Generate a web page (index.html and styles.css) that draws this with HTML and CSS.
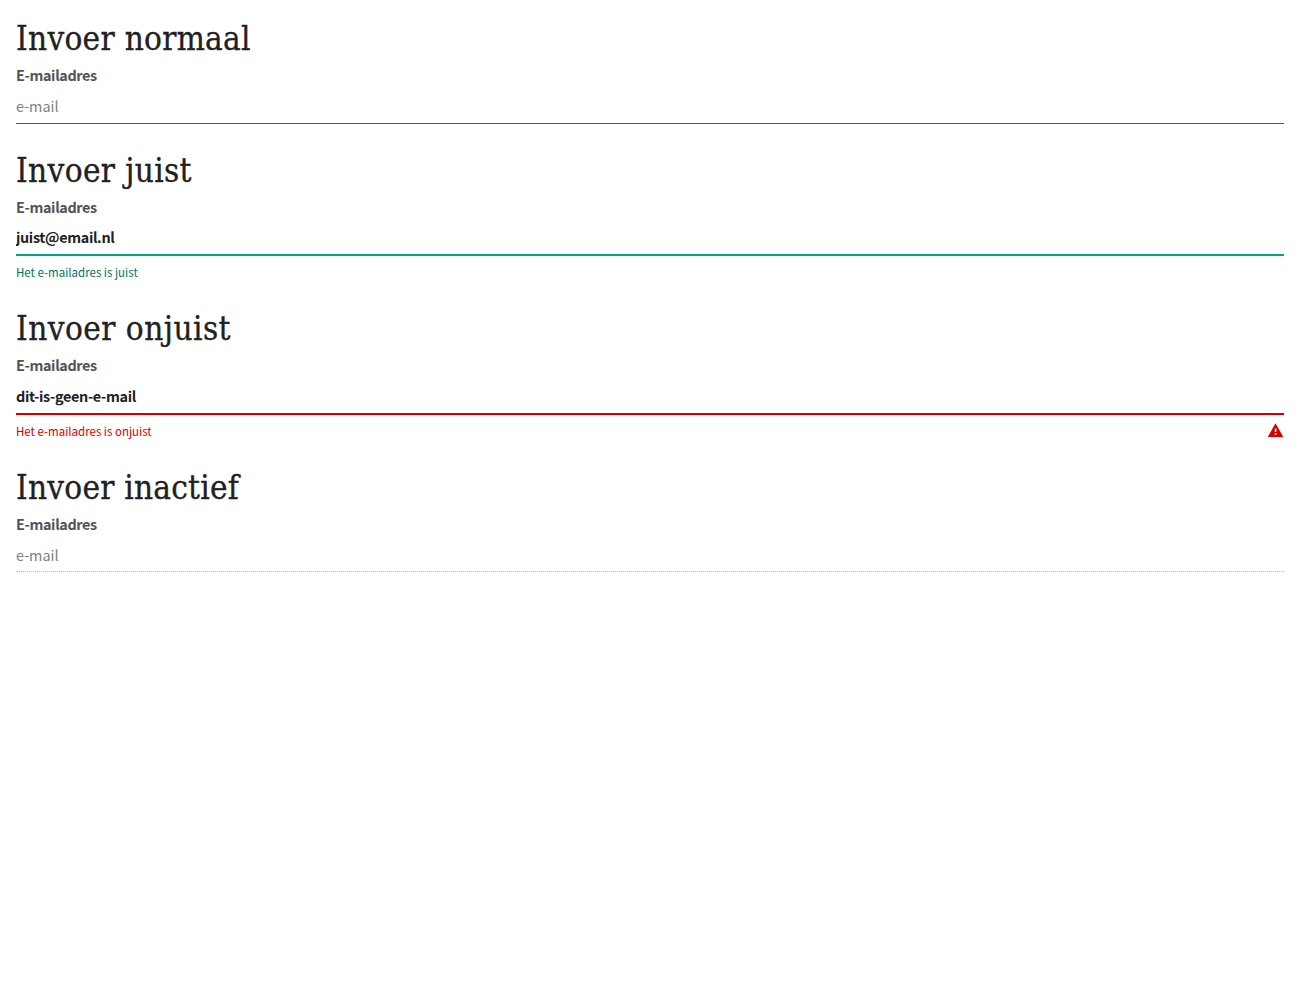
FILE: index.html
```html
<!DOCTYPE html>
<html lang="nl">
<head>
<meta charset="utf-8">
<title>Invoer</title>
<link rel="stylesheet" href="styles.css">
</head>
<body>
<main class="forms">
  <section class="field field--normal">
    <h1 class="title">Invoer normaal</h1>
    <label class="label" for="a">E-mailadres</label>
    <input class="input" id="a" placeholder="e-mail">
  </section>
  <section class="field field--valid">
    <h1 class="title">Invoer juist</h1>
    <label class="label" for="b">E-mailadres</label>
    <input class="input" id="b" value="juist@email.nl">
    <div class="message"><span>Het e-mailadres is juist</span></div>
  </section>
  <section class="field field--invalid">
    <h1 class="title">Invoer onjuist</h1>
    <label class="label" for="c">E-mailadres</label>
    <input class="input" id="c" value="dit-is-geen-e-mail">
    <div class="message"><span>Het e-mailadres is onjuist</span>
      <svg class="warning" viewBox="0 0 16 14" width="16" height="14" aria-hidden="true"><path fill="#d40000" fill-rule="evenodd" d="M7.5 .3 15.3 14H-.2ZM6.8 5.5V9H8.4V5.5ZM6.8 10.3V12H8.4V10.3Z"/></svg>
    </div>
  </section>
  <section class="field field--disabled">
    <h1 class="title">Invoer inactief</h1>
    <label class="label" for="d">E-mailadres</label>
    <input class="input" id="d" placeholder="e-mail" disabled>
  </section>
</main>
</body>
</html>
```
FILE: styles.css
```css
* { box-sizing: border-box; }
body {
  margin: 0;
  background: #fff;
  color: #212121;
  font-family: "Noto Sans CJK SC", "Open Sans", sans-serif;
}
.forms { padding: 16px; }
.field { display: flex; flex-direction: column; height: 132px; }
.field--valid { height: 158px; }
.field--invalid { height: 159px; }
.title {
  margin: 0;
  height: 47px;
  font: 400 33px/46px "DejaVu Serif Condensed", "DejaVu Serif", serif;
  font-stretch: condensed;
  letter-spacing: .28px;
  -webkit-text-stroke: .3px currentColor;
  white-space: nowrap;
}
.field--valid .title { letter-spacing: .35px; }
.field--invalid .title { letter-spacing: .45px; }
.field--disabled .title { letter-spacing: .22px; }
.label {
  height: 24px;
  color: #535353;
  font-size: 14.4px;
  line-height: 24px;
  font-weight: 700;
  letter-spacing: -.36px;
}
.input {
  width: 100%;
  height: 37px;
  padding: 0;
  border: 0;
  border-bottom: 1px solid #535353;
  outline: 0;
  background: transparent;
  color: #212121;
  font: 400 14.4px/24px "Noto Sans CJK SC", "Open Sans", sans-serif;
}
.input::placeholder { color: #808080; opacity: 1; }
.field--valid .input,
.field--invalid .input { font-weight: 700; letter-spacing: -.35px; }
.field--valid .input { border-bottom: 2px solid #00a487; }
.field--invalid .input { border-bottom: 2px solid #d40000; height: 38px; }
.field--disabled .input { border-bottom: 1px dotted #b8b8b8; height: 36px; padding-top: 1px; }
.message {
  display: flex;
  justify-content: space-between;
  align-items: center;
  height: 20px;
  margin-top: 6px;
  font-size: 11.5px;
  line-height: 20px;
}
.field--valid .message { color: #00745f; }
.field--invalid .message { color: #d40000; }
.warning { display: block; margin-bottom: 2px; overflow: visible; }
```
